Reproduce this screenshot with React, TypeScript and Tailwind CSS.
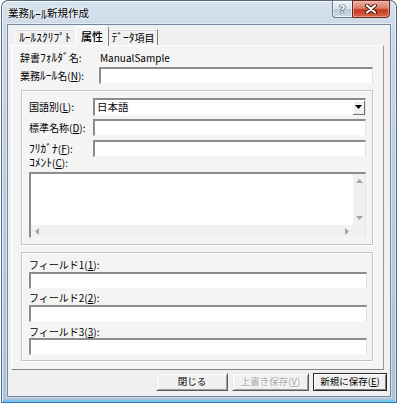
import React from "react";

const U = ({ c }: { c: string }) => <span className="underline underline-offset-1">{c}</span>;
const H = ({ t }: { t: string }) => <span className="text-[11.5px] leading-none">{t}</span>;

const sunken =
  "bg-white border-t-2 border-l-2 border-r border-b border-t-[#8c8c8c] border-l-[#8c8c8c] border-r-[#e2e2e2] border-b-[#f6f6f6]";

function Up() {
  return (
    <svg width="7" height="4" viewBox="0 0 7 4">
      <path d="M0 4 L3.5 0 L7 4 Z" fill="#a3a3a3" />
    </svg>
  );
}
function Down({ color = "#a3a3a3" }: { color?: string }) {
  return (
    <svg width="7" height="4" viewBox="0 0 7 4">
      <path d="M0 0 L7 0 L3.5 4 Z" fill={color} />
    </svg>
  );
}
function Left() {
  return (
    <svg width="4" height="7" viewBox="0 0 4 7">
      <path d="M4 0 L4 7 L0 3.5 Z" fill="#a3a3a3" />
    </svg>
  );
}
function Right() {
  return (
    <svg width="4" height="7" viewBox="0 0 4 7">
      <path d="M0 0 L4 3.5 L0 7 Z" fill="#a3a3a3" />
    </svg>
  );
}

export default function App() {
  return (
    <div className="w-[399px] h-[407px] bg-white font-['Noto_Sans_CJK_JP',sans-serif] text-black text-[10px] leading-none">
      <div className="ml-[1px] w-[396px] h-[403px] rounded-t-[7px] border border-[#56687d] border-b-[#2f7fb8] bg-[linear-gradient(180deg,#d7e3ee_0%,#c9d8e7_8%,#bccfe2_40%,#a9c3dc_100%)] shadow-[inset_1px_1px_0_rgba(255,255,255,0.75),inset_-1px_0_0_rgba(255,255,255,0.5),inset_0_-2px_0_#79c4ec] flex flex-col px-[5px] pb-[5px]">
        {/* title bar */}
        <div className="h-[23px] flex justify-between">
          <div className="pt-[7px] pl-[1px] text-[10.5px] text-black [text-shadow:0_0_4px_#ffffff,0_0_2px_#ffffff] flex items-center h-[18px]">
            業務<span className="text-[12px]">ﾙｰﾙ</span>新規作成
          </div>
          <div className="flex -mt-px mr-px">
            <div className="w-[20px] h-[18px] rounded-bl-[4px] border border-[#6b7b8e] border-r-0 bg-[linear-gradient(180deg,#eef3f8_0%,#d9e3ee_48%,#bccbdc_52%,#cbd8e6_100%)] flex items-center justify-center shadow-[inset_0_0_0_1px_rgba(255,255,255,0.6)]">
              <span className="font-['DejaVu_Sans',sans-serif] text-[11px] font-bold text-white [text-shadow:0_0_1px_#1d2733,0_0_1px_#1d2733,0_0_1px_#1d2733]">?</span>
            </div>
            <div className="w-[38px] h-[18px] rounded-br-[4px] border border-[#6a2418] bg-[linear-gradient(180deg,#eab0a2_0%,#dc7d68_45%,#c5391f_55%,#d8664a_100%)] flex items-center justify-center shadow-[inset_0_0_0_1px_rgba(255,210,200,0.5)]">
              <svg width="12" height="10" viewBox="0 0 12 10">
                <path d="M2 1.5 L10 8.5 M10 1.5 L2 8.5" stroke="#3b0f08" strokeWidth="4" strokeLinecap="round" />
                <path d="M2 1.5 L10 8.5 M10 1.5 L2 8.5" stroke="#ffffff" strokeWidth="2.2" strokeLinecap="round" />
              </svg>
            </div>
          </div>
        </div>

        {/* client area */}
        <div className="flex-1 bg-[#f0f0f0] border border-[#75879b] flex flex-col shadow-[0_0_0_1px_rgba(255,255,255,0.45)]">
          {/* tabs */}
          <div className="h-[20px] flex items-end pl-[6px] relative z-10">
            <div className="w-[61px] h-[16px] border-t border-l border-t-[#fdfdfd] border-l-[#fdfdfd] shadow-[inset_0_1px_0_#d9d9d9] bg-[#f0f0f0] flex items-center justify-center rounded-tl-[2px]">
              <H t="ﾙｰﾙｽｸﾘﾌﾟﾄ" />
            </div>
            <div className="w-[34px] h-[20px] -mb-px border-t border-l border-r border-t-white border-l-white border-r-[#7f7f7f] bg-[#f4f4f4] flex items-center justify-center pb-[1px] font-medium text-[11px] rounded-t-[2px]">
              属性
            </div>
            <div className="w-[49px] h-[16px] border-t border-r border-t-[#fdfdfd] border-r-[#7f7f7f] shadow-[inset_0_1px_0_#d9d9d9] bg-[#f0f0f0] flex items-center justify-center">
              <H t="ﾃﾞｰﾀ" />項目
            </div>
          </div>

          {/* tab panel */}
          <div className="ml-[3px] w-[373px] h-[325px] bg-[#f4f4f4] border-t border-l border-t-white border-l-white border-r border-b border-r-[#9a9a9a] border-b-[#858585] flex flex-col pl-[8px]">
            <div className="mt-[6px] h-[12px] flex items-center">
              <div className="w-[79px] flex items-center">
                辞書<H t="ﾌｫﾙﾀﾞ" />名:
              </div>
              <div className="pl-[1px]">ManualSample</div>
            </div>
            <div className="mt-[3px] h-[17px] flex items-center">
              <div className="w-[79px] flex items-center">
                業務<H t="ﾙｰﾙ" />名(<U c="N" />):
              </div>
              <div className={`w-[274px] h-[17px] ${sunken}`}></div>
            </div>

            {/* group 1 */}
            <div className="mt-[6px] ml-[1px] w-[352px] h-[155px] border border-[#c4c4c4] shadow-[inset_1px_1px_0_#ffffff,1px_1px_0_#ffffff] flex flex-col pt-[7px] pl-[7px]">
              <div className="h-[18px] flex items-center">
                <div className="w-[64px]">
                  国語別(<U c="L" />):
                </div>
                <div className={`w-[273px] h-[18px] flex items-center justify-between ${sunken}`}>
                  <span className="pl-[2px] text-[10.5px]">日本語</span>
                  <div className="w-[12px] h-[14px] bg-[#f0f0f0] border-r border-b border-r-[#6f6f6f] border-b-[#6f6f6f] shadow-[inset_1px_1px_0_#ffffff] flex items-center justify-center">
                    <Down color="#000000" />
                  </div>
                </div>
              </div>
              <div className="mt-[3px] h-[17px] flex items-center">
                <div className="w-[64px]">
                  標準名称(<U c="D" />):
                </div>
                <div className={`w-[273px] h-[17px] ${sunken}`}></div>
              </div>
              <div className="mt-[4px] h-[17px] flex items-center">
                <div className="w-[64px] flex items-center">
                  <H t="ﾌﾘｶﾞﾅ" />(<U c="F" />):
                </div>
                <div className={`w-[273px] h-[17px] ${sunken}`}></div>
              </div>
              <div className="h-[12px] flex items-center">
                <H t="ｺﾒﾝﾄ" />(<U c="C" />):
              </div>
              <div className={`mt-[3px] w-[337px] h-[66px] grid grid-cols-[1fr_12px] grid-rows-[1fr_12px] ${sunken}`}>
                <div className="bg-white"></div>
                <div className="bg-[#f1f1f1] flex flex-col items-center justify-between py-[5px]">
                  <Up />
                  <Down />
                </div>
                <div className="bg-[#f1f1f1] flex items-center justify-between px-[4px]">
                  <Left />
                  <Right />
                </div>
                <div className="bg-[#f0f0f0]"></div>
              </div>
            </div>

            {/* group 2 */}
            <div className="mt-[7px] ml-[1px] w-[352px] h-[109px] border border-[#c4c4c4] shadow-[inset_1px_1px_0_#ffffff,1px_1px_0_#ffffff] flex flex-col pt-[6px] pl-[7px]">
              <div className="h-[12px] flex items-center">
                フィールド1(<U c="1" />):
              </div>
              <div className={`mt-[1px] w-[338px] h-[17px] ${sunken}`}></div>
              <div className="mt-[3px] h-[12px] flex items-center">
                フィールド2(<U c="2" />):
              </div>
              <div className={`mt-[1px] w-[338px] h-[17px] ${sunken}`}></div>
              <div className="mt-[4px] h-[12px] flex items-center">
                フィールド3(<U c="3" />):
              </div>
              <div className={`w-[338px] h-[17px] ${sunken}`}></div>
            </div>
          </div>

          {/* buttons */}
          <div className="mt-[3px] flex justify-end pr-[3px] gap-[4px] text-[9.5px]">
            <div className="w-[72px] h-[18px] bg-[#f0f0f0] border border-t-[#e8e8e8] border-l-[#e8e8e8] border-r-[#5a5a5a] border-b-[#5a5a5a] shadow-[inset_1px_1px_0_#ffffff,inset_-1px_-1px_0_#a0a0a0] flex items-center justify-center">
              閉じる
            </div>
            <div className="w-[77px] h-[18px] bg-[#f0f0f0] border border-t-[#e8e8e8] border-l-[#e8e8e8] border-r-[#5a5a5a] border-b-[#5a5a5a] shadow-[inset_1px_1px_0_#ffffff,inset_-1px_-1px_0_#a0a0a0] flex items-center justify-center text-[#a8a8a8] [text-shadow:1px_1px_0_#ffffff]">
              上書き保存(<U c="V" />)
            </div>
            <div className="w-[74px] h-[18px] bg-[#f0f0f0] border border-[#2a2a2a] shadow-[inset_1px_1px_0_#ffffff,inset_-1px_-1px_0_#7a7a7a] flex items-center justify-center">
              新規に保存(<U c="E" />)
            </div>
          </div>
        </div>
      </div>
    </div>
  );
}
